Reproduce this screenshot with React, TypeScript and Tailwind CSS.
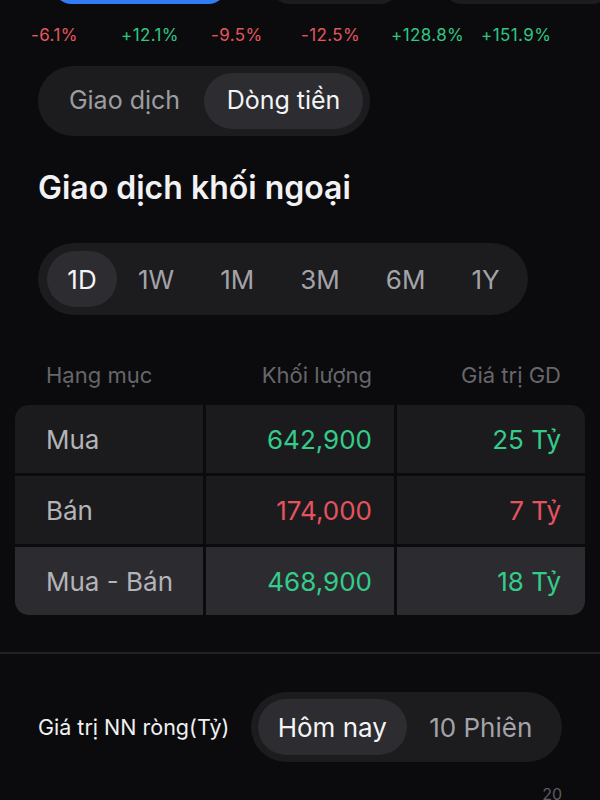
import React from "react";

const changes = [
  { v: "-6.1%", up: false },
  { v: "+12.1%", up: true },
  { v: "-9.5%", up: false },
  { v: "-12.5%", up: false },
  { v: "+128.8%", up: true },
  { v: "+151.9%", up: true },
];

const ranges = ["1W", "1M", "3M", "6M", "1Y"];

const rows = [
  { label: "Mua", vol: "642,900", val: "25 Tỷ", up: true, total: false },
  { label: "Bán", vol: "174,000", val: "7 Tỷ", up: false, total: false },
  { label: "Mua - Bán", vol: "468,900", val: "18 Tỷ", up: true, total: true },
];

export default function App() {
  return (
    <div
      className="w-[600px] h-[800px] overflow-hidden bg-[#0b0b0d] text-[#f2f2f4]"
      style={{ fontFamily: "Inter, 'Noto Sans', sans-serif" }}
    >
      {/* bottoms of the buttons above */}
      <div className="h-[4px] overflow-hidden">
        <div className="flex pl-[52px] gap-[42px] -mt-[36px]">
          <div className="w-[176px] h-[40px] shrink-0 rounded-full bg-[#2f7cf6]" />
          <div className="w-[130px] h-[40px] shrink-0 rounded-full bg-[#1c1c1f]" />
          <div className="w-[170px] h-[40px] shrink-0 rounded-full bg-[#1c1c1f]" />
        </div>
      </div>

      <div className="mt-[21px] pl-[31px] grid grid-cols-[90px_90px_90px_90px_90px_90px] text-[17px] leading-[20px] tracking-[0.4px]">
        {changes.map((c) => (
          <div key={c.v} className={c.up ? "text-[#30c683]" : "text-[#e2575f]"}>
            {c.v}
          </div>
        ))}
      </div>

      <div className="mt-[21px] ml-[38px] w-[332px] h-[70px] p-[7px] rounded-full bg-[#1c1c1f] flex">
        <div className="flex-1 flex items-center justify-center text-[25px] text-[#9c9ca1]">
          Giao dịch
        </div>
        <div className="flex-1 flex items-center justify-center rounded-full bg-[#2c2c31] text-[25px] text-[#f4f4f6]">
          Dòng tiền
        </div>
      </div>

      <div className="mt-[34px] ml-[38px] text-[32px] leading-[36px] font-semibold">
        Giao dịch khối ngoại
      </div>

      <div className="mt-[37px] ml-[38px] w-[490px] h-[72px] pl-[9px] rounded-full bg-[#1c1c1f] flex items-center text-[26px]">
        <div className="w-[70px] h-[56px] rounded-full bg-[#2c2c31] flex items-center justify-center text-[#f4f4f6]">
          1D
        </div>
        <div className="ml-[21px] flex items-center gap-[46px] text-[#a3a3a8]">
          {ranges.map((r) => (
            <span key={r}>{r}</span>
          ))}
        </div>
      </div>

      <div className="mt-[48px] mx-[15px] grid grid-cols-3 gap-[3px] text-[22px] leading-[24px] text-[#66666b]">
        <div className="pl-[31px]">Hạng mục</div>
        <div className="text-right pr-[22px]">Khối lượng</div>
        <div className="text-right pr-[24px]">Giá trị GD</div>
      </div>

      <div className="mt-[18px] mx-[15px] rounded-[14px] overflow-hidden flex flex-col gap-[3px]">
        {rows.map((r) => {
          const bg = r.total ? "bg-[#2c2c30]" : "bg-[#1b1b1d]";
          const color = r.up ? "text-[#34cc8a]" : "text-[#e5535f]";
          return (
            <div key={r.label} className="grid grid-cols-3 gap-[3px] h-[68px]">
              <div className={`${bg} flex items-center pl-[31px] text-[26px] text-[#b3b3b8]`}>{r.label}</div>
              <div className={`${bg} flex items-center justify-end pr-[22px] text-[26px] ${color}`}>{r.vol}</div>
              <div className={`${bg} flex items-center justify-end pr-[24px] text-[26px] ${color}`}>{r.val}</div>
            </div>
          );
        })}
      </div>

      <div className="mt-[37px] h-[2px] bg-[#222225]" />

      <div className="mt-[38px] pl-[38px] flex items-center gap-[21px]">
        <div className="w-[192px] text-[21.5px] whitespace-nowrap text-[#f0f0f2]">Giá trị NN ròng(Tỷ)</div>
        <div className="w-[311px] h-[70px] p-[7px] rounded-full bg-[#1c1c1f] flex">
          <div className="flex-1 flex items-center justify-center rounded-full bg-[#2c2c31] text-[26px] text-[#f4f4f6]">
            Hôm nay
          </div>
          <div className="flex-1 flex items-center justify-center text-[26px] text-[#a3a3a8]">
            10 Phiên
          </div>
        </div>
      </div>

      <div className="mt-[22px] pr-[38px] text-right text-[16px] leading-[20px] text-[#5c5c60]">20</div>
    </div>
  );
}
